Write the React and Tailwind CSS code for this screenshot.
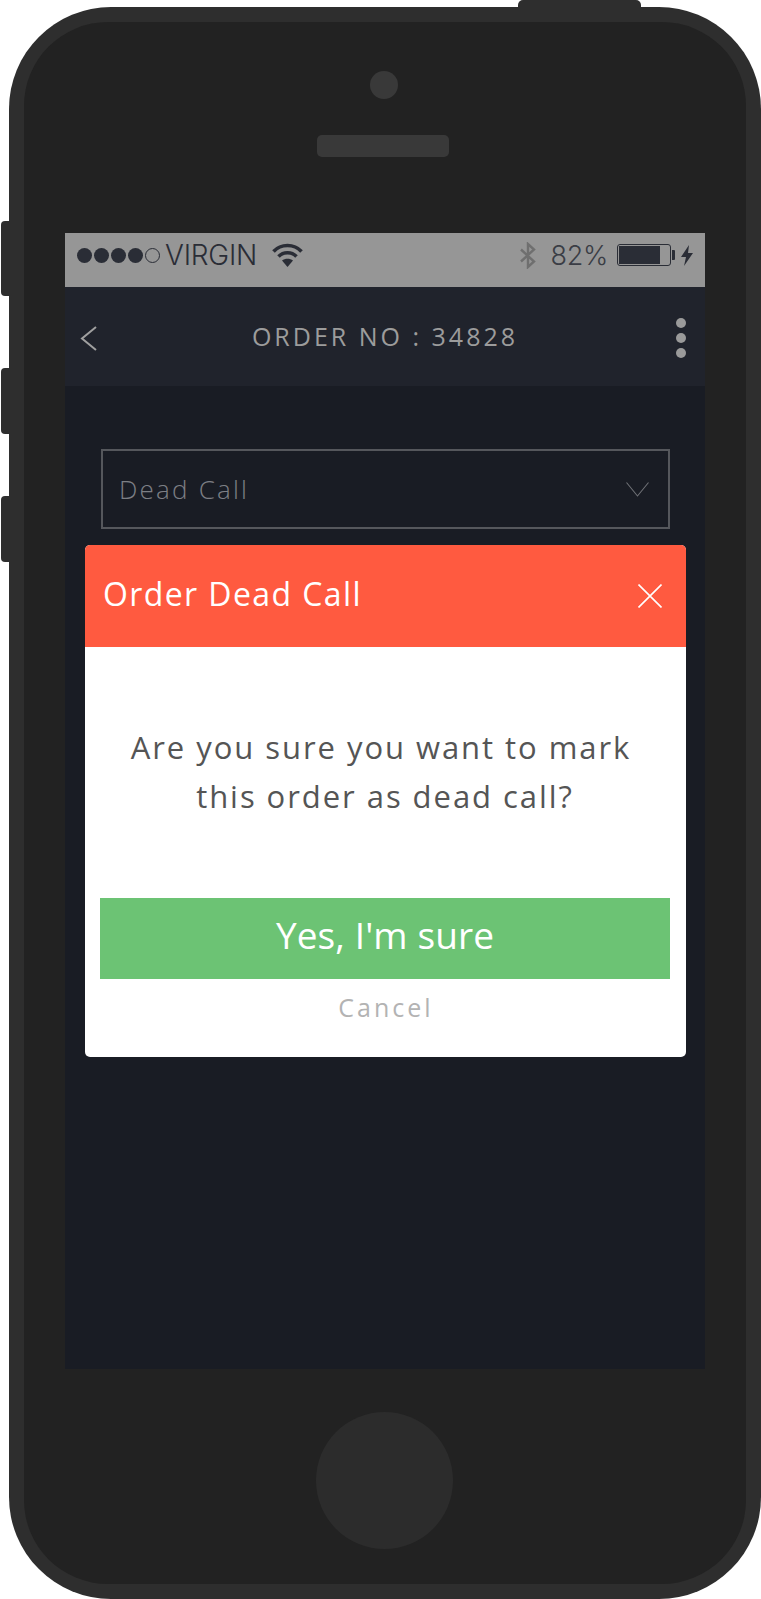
const openSans = { fontFamily: '"Open Sans", sans-serif' };

function StatusBar() {
  return (
    <div className="flex h-[54px] items-center bg-[#969696] pb-[10px] pl-[12px] pr-[12px] text-[#2a2d36] [font-family:Inter,sans-serif]">
      <div className="flex items-center gap-[2px]">
        {[0, 1, 2, 3].map((i) => (
          <span key={i} className="h-[15px] w-[15px] rounded-full bg-[#2a2d36]" />
        ))}
        <span className="h-[15px] w-[15px] rounded-full border border-[#2a2d36]" />
      </div>
      <span className="ml-[5px] text-[28px] font-light leading-none tracking-[-0.2px]">VIRGIN</span>
      <svg className="ml-[15px]" width="31" height="24" viewBox="0 0 31 24" fill="none" stroke="#2a2d36" strokeWidth="3.6">
        <path d="M1.5 8.5C9 0.5 22 0.5 29.5 8.5" />
        <path d="M6.5 13.5C11.5 8.5 19.5 8.5 24.5 13.5" />
        <path d="M15.5 24L10 17.5C13 15 18 15 21 17.5Z" fill="#2a2d36" stroke="none" />
      </svg>
      <svg className="ml-auto" width="16" height="27" viewBox="0 0 16 27" fill="none" stroke="#6f6f6f" strokeWidth="2.4">
        <path d="M1 7.5L14 19.5L8 25V2L14 7.5L1 19.5" />
      </svg>
      <span className="ml-[15px] text-[27px] font-light leading-none tracking-[-0.3px] text-[#3a3d45]">82%</span>
      <div className="ml-[9px] flex items-center">
        <div className="h-[22px] w-[54px] rounded-[3px] border border-[#2a2d36] p-[1px]">
          <div className="h-full w-[41px] bg-[#2a2d36]" />
        </div>
        <span className="ml-[1px] h-[10px] w-[3px] rounded-r-[1px] bg-[#2a2d36]" />
      </div>
      <svg className="ml-[6px]" width="12" height="21" viewBox="0 0 12 21" fill="#2a2d36">
        <path d="M8 0L0 12H5L3 21L12 8H7L8 0Z" />
      </svg>
    </div>
  );
}

function NavBar() {
  return (
    <div className="relative flex h-[99px] items-center justify-center bg-[#20232c]">
      <svg className="absolute left-[15px] top-[39px]" width="17" height="25" viewBox="0 0 17 25" fill="none" stroke="#a0a0a0" strokeWidth="2">
        <path d="M16 1L2 12.5L16 24" />
      </svg>
      <span className="text-[25px] font-normal tracking-[3px] text-[#9c9c9c]" style={openSans}>
        ORDER NO : 34828
      </span>
      <div className="absolute right-[19px] top-[31px] flex flex-col gap-[5px]">
        <span className="h-[10px] w-[10px] rounded-full bg-[#9a9a9a]" />
        <span className="h-[10px] w-[10px] rounded-full bg-[#9a9a9a]" />
        <span className="h-[10px] w-[10px] rounded-full bg-[#9a9a9a]" />
      </div>
    </div>
  );
}

function Modal() {
  return (
    <div className="absolute left-[20px] top-[312px] w-[601px] overflow-hidden rounded-[5px] bg-white" style={openSans}>
      <div className="flex h-[102px] items-center justify-between bg-[#ff5a40] pb-[5px] pl-[18px] pr-[24px]">
        <span className="text-[32px] tracking-[1.4px] text-white">Order Dead Call</span>
        <svg className="mt-[5px]" width="24" height="24" viewBox="0 0 24 24" fill="none" stroke="white" strokeWidth="1.6">
          <path d="M0.5 0.5L23.5 23.5M23.5 0.5L0.5 23.5" />
        </svg>
      </div>
      <div className="flex h-[410px] flex-col items-center px-[15px] pr-[16px]">
        <p className="mt-[76px] whitespace-nowrap text-center text-[31px] leading-[49px] tracking-[1.95px] text-[#555555]">
          <span className="block pr-[8px]">Are you sure you want to mark</span>
          this order as dead call?
        </p>
        <button className="mb-0 mt-[77px] h-[81px] w-full bg-[#6cc374] pb-[8px] text-[37px] tracking-[0.1px] text-white">Yes, I'm sure</button>
        <button className="ml-[2px] mt-[10px] text-[25px] tracking-[3px] text-[#b3b3b3]">Cancel</button>
      </div>
    </div>
  );
}

function Screen() {
  return (
    <div className="relative mt-[76px] flex h-[1136px] w-[640px] flex-col bg-[#191c24]">
      <StatusBar />
      <NavBar />
      <div className="ml-[36px] mr-[35px] mt-[63px] flex h-[80px] items-center justify-between border-2 border-[#55575c] pl-[16px] pr-[19px]">
        <span className="text-[26px] font-light tracking-[2.2px] text-[#7d7f84]" style={openSans}>
          Dead Call
        </span>
        <svg width="23" height="15" viewBox="0 0 23 15" fill="none" stroke="#6f7176" strokeWidth="1.1">
          <path d="M0.5 0.5L11.5 14L22.5 0.5" />
        </svg>
      </div>
      <Modal />
    </div>
  );
}

export default function App() {
  return (
    <div className="relative h-[1599px] w-[761px] overflow-hidden bg-white pl-[9px] pt-[7px]">
      {/* hardware buttons */}
      <div className="absolute left-[518px] top-0 h-[10px] w-[123px] rounded-t-[5px] bg-[#2e2e2e]" />
      <div className="absolute left-[1px] top-[221px] h-[75px] w-[12px] rounded-l-[4px] bg-[#2e2e2e]" />
      <div className="absolute left-[1px] top-[368px] h-[66px] w-[12px] rounded-l-[4px] bg-[#2e2e2e]" />
      <div className="absolute left-[1px] top-[496px] h-[66px] w-[12px] rounded-l-[4px] bg-[#2e2e2e]" />

      <div className="relative h-[1592px] w-[752px] rounded-[102px] bg-[#2e2e2e] px-[15px] py-[15px]">
        <div className="flex h-[1562px] w-[722px] flex-col items-center rounded-[84px] bg-[#222222]">
          <div className="mr-[3px] mt-[49px] h-[28px] w-[28px] rounded-full bg-[#393939]" />
          <div className="mr-[4px] mt-[36px] h-[22px] w-[132px] rounded-[5px] bg-[#393939]" />
          <Screen />
          <div className="mr-[2px] mt-[43px] h-[137px] w-[137px] rounded-full bg-[#2c2c2c]" />
        </div>
      </div>
    </div>
  );
}
